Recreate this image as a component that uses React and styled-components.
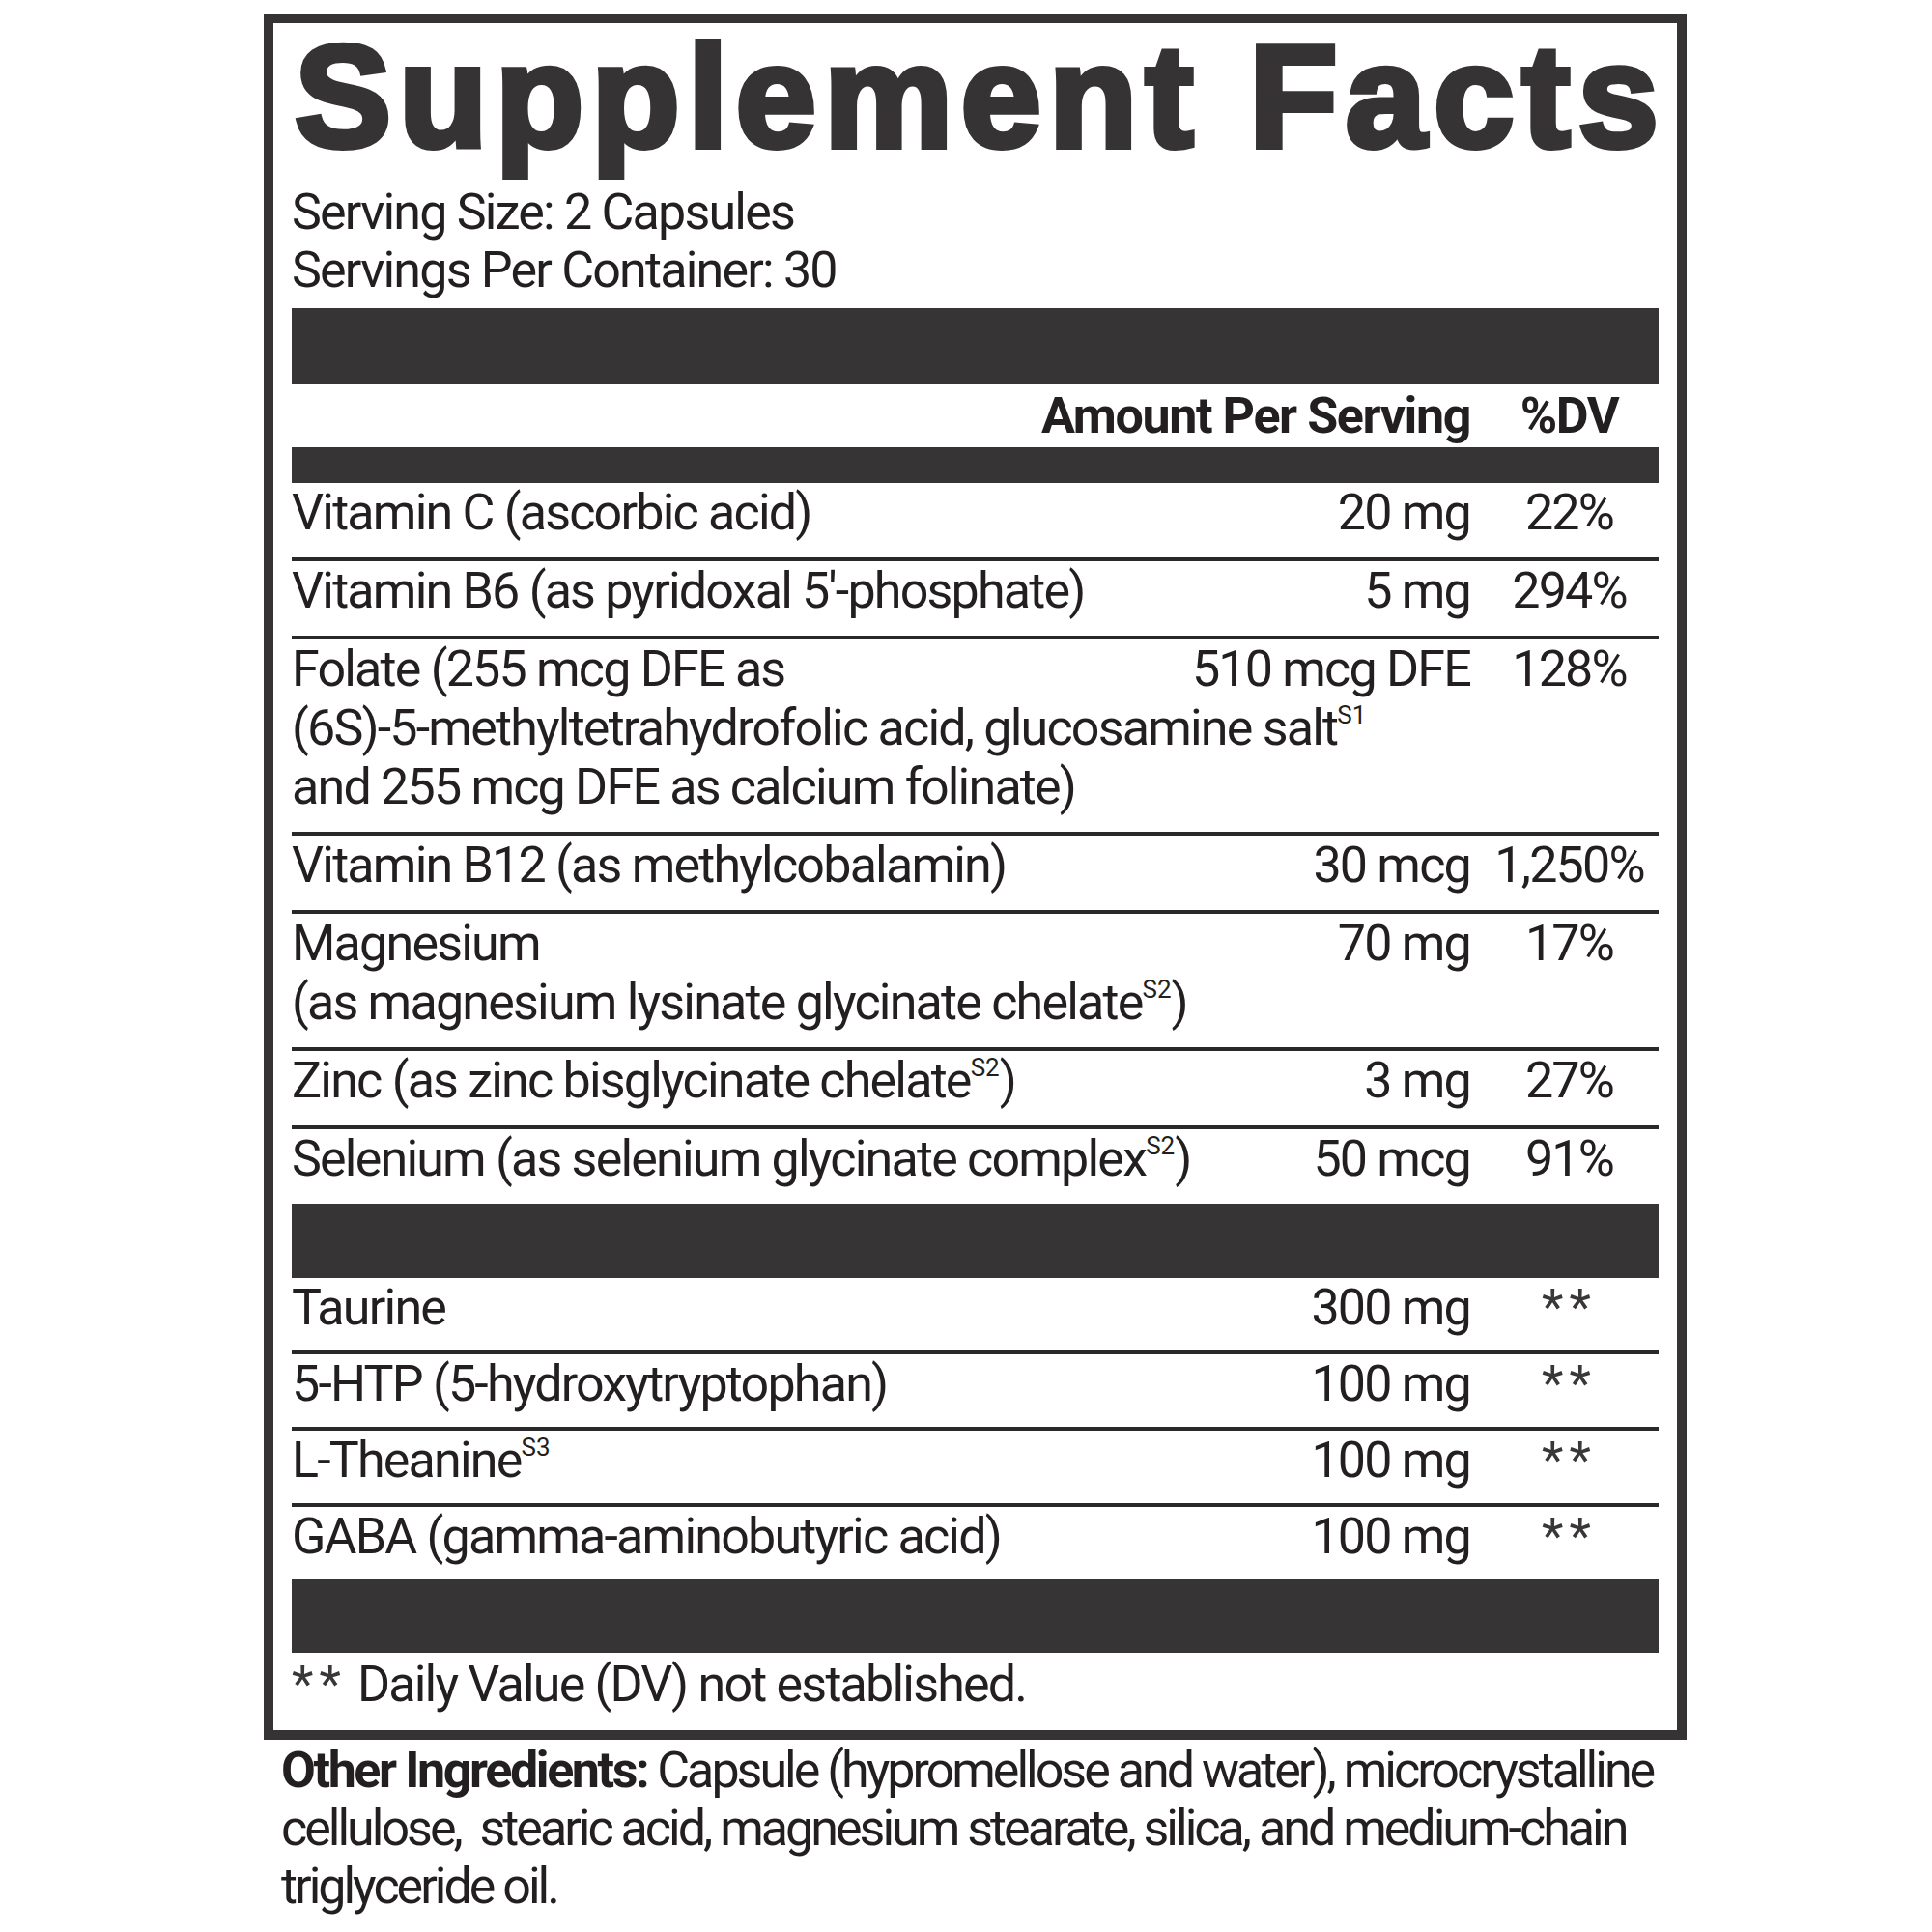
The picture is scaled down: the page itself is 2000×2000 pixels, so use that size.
import React from 'react';
import styled, { createGlobalStyle } from 'styled-components';

const GlobalStyle = createGlobalStyle`
  html, body {
    margin: 0;
    padding: 0;
    background: #ffffff;
  }
`

const Page = styled.div`
  padding: 14px 0 0 273px;
  font-family: Roboto, "Liberation Sans", sans-serif;
  color: #231f20;
`

const Label = styled.section`
  box-sizing: border-box;
  width: 1473px;
  border: 10px solid #363334;
  padding: 6px 19px 17px;
`

const Title = styled.h1`
  margin: 0;
  font-family: "Liberation Sans", Arial, sans-serif;
  font-weight: 700;
  font-size: 150px;
  line-height: 140px;
  letter-spacing: 8px;
  color: #363334;
  -webkit-text-stroke: 6px #363334;
  padding-left: 3px;
  white-space: nowrap;
`

const Text = styled.div`
  font-size: 52px;
  line-height: 60px;
  letter-spacing: -1.8px;
  white-space: nowrap;
`

const Serving = styled(Text)`
  margin-top: 20px;
`

const Bar = styled.div`
  height: ${props => props.$h}px;
  margin-top: ${props => props.$mt || 0}px;
  background: #373435;
`

const Group = styled.div`
  display: flex;
  flex-flow: column nowrap;
`

const Row = styled.div`
  display: flex;
  flex-flow: row nowrap;
  align-items: flex-start;
  padding: 0 0 ${props => props.$pb || 16}px;
  border-bottom: 4px solid #2b2829;
  font-size: 52px;
  line-height: 61px;
  letter-spacing: -1.8px;
  white-space: nowrap;
  &:last-child {
    border-bottom: none;
  }
`

const HeadRow = styled(Row)`
  padding: 3px 0 2px;
  line-height: 60px;
  font-weight: 700;
  letter-spacing: -1.4px;
  border-bottom: none;
`

const Name = styled.div`
  flex: 1 1 0;
  min-width: 0;
`

const Amount = styled.div`
  flex: none;
  text-align: right;
`

const Dv = styled.div`
  flex: none;
  width: 185px;
  margin-left: 10px;
  text-align: center;
`

const Stars = styled.span`
  letter-spacing: 6px;
  color: #3a3738;
`

const Sup = styled.sup`
  font-size: 26px;
  line-height: 0;
  letter-spacing: 0;
  vertical-align: 22px;
`

const Footnote = styled(Text)`
  padding-top: 3px;
`

const Other = styled(Text)`
  padding: 2px 0 0 18px;
  letter-spacing: -3px;
  b {
    font-weight: 700;
    letter-spacing: -2.4px;
  }
`

const vitamins = [
  { name: ['Vitamin C (ascorbic acid)'], amount: '20 mg', dv: '22%' },
  { name: ["Vitamin B6 (as pyridoxal 5'-phosphate)"], amount: '5 mg', dv: '294%' },
  {
    name: [
      'Folate (255 mcg DFE as',
      <>(6S)-5-methyltetrahydrofolic acid, glucosamine salt<Sup>S1</Sup></>,
      'and 255 mcg DFE as calcium folinate)'
    ],
    amount: '510 mcg DFE',
    dv: '128%'
  },
  { name: ['Vitamin B12 (as methylcobalamin)'], amount: '30 mcg', dv: '1,250%' },
  {
    name: ['Magnesium', <>(as magnesium lysinate glycinate chelate<Sup>S2</Sup>)</>],
    amount: '70 mg',
    dv: '17%'
  },
  { name: [<>Zinc (as zinc bisglycinate chelate<Sup>S2</Sup>)</>], amount: '3 mg', dv: '27%' },
  { name: [<>Selenium (as selenium glycinate complex<Sup>S2</Sup>)</>], amount: '50 mcg', dv: '91%' }
]

const others = [
  { name: ['Taurine'], amount: '300 mg' },
  { name: ['5-HTP (5-hydroxytryptophan)'], amount: '100 mg' },
  { name: [<>L-Theanine<Sup>S3</Sup></>], amount: '100 mg' },
  { name: ['GABA (gamma-aminobutyric acid)'], amount: '100 mg' }
]

const FactRow = ({ name, amount, dv, pb }) => (
  <Row $pb={pb}>
    <Name>
      {name.map((line, i) => (
        <div key={i}>{line}</div>
      ))}
    </Name>
    <Amount>{amount}</Amount>
    <Dv>{dv ? dv : <Stars>**</Stars>}</Dv>
  </Row>
)

export default function App() {
  return (
    <Page>
      <GlobalStyle />
      <Label>
        <Title>Supplement Facts</Title>
        <Serving>
          Serving Size: 2 Capsules
          <br />
          Servings Per Container: 30
        </Serving>
        <Bar $h={79} $mt={9} />
        <HeadRow>
          <Name />
          <Amount>Amount Per Serving</Amount>
          <Dv>%DV</Dv>
        </HeadRow>
        <Bar $h={37} />
        <Group>
          {vitamins.map((v, i) => (
            <FactRow key={i} {...v} />
          ))}
        </Group>
        <Bar $h={77} />
        <Group>
          {others.map((v, i) => (
            <FactRow key={i} pb={14} {...v} />
          ))}
        </Group>
        <Bar $h={76} />
        <Footnote>
          <Stars>**</Stars> Daily Value (DV) not established.
        </Footnote>
      </Label>
      <Other>
        <b>Other Ingredients:</b> Capsule (hypromellose and water), microcrystalline
        <br />
        cellulose,&nbsp; stearic acid, magnesium stearate, silica, and medium-chain
        <br />
        triglyceride oil.
      </Other>
    </Page>
  )
}
